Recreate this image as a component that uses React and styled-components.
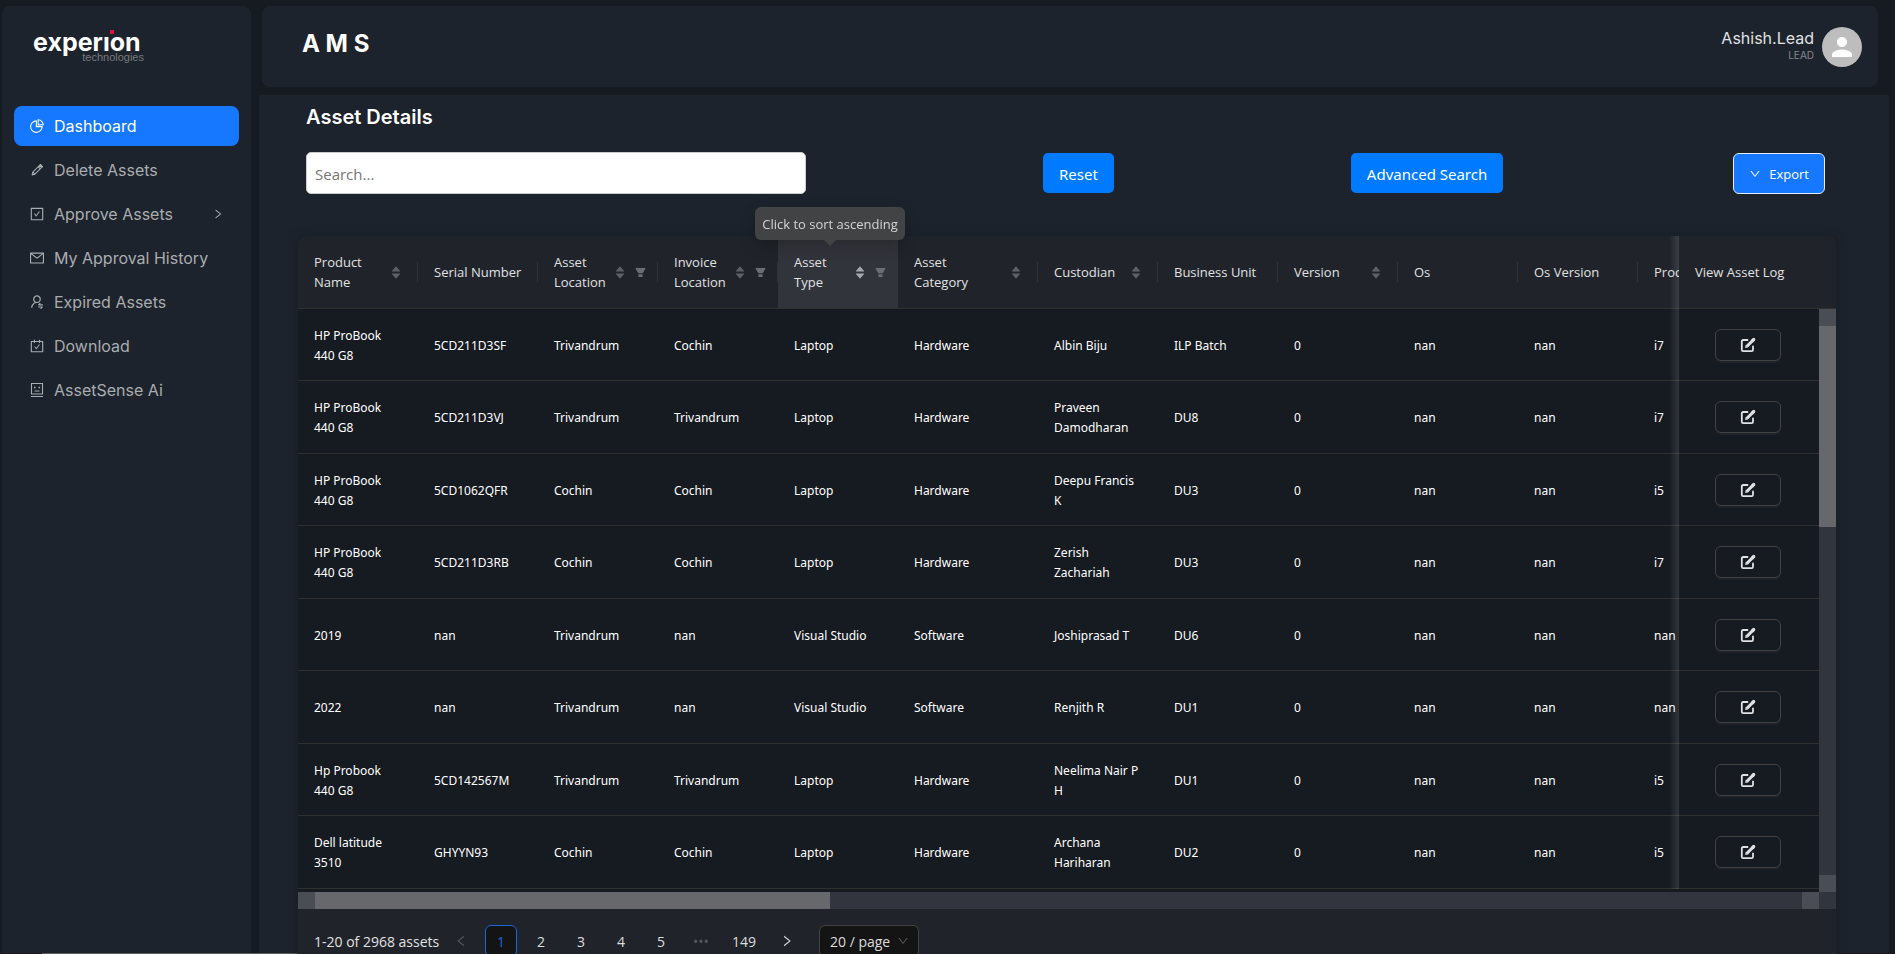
import React from "react";
import styled, { createGlobalStyle, css } from "styled-components";
import {
  AiOutlinePieChart,
  AiOutlineCheckSquare,
  AiOutlineMail,
  AiOutlineUserSwitch,
  AiOutlineCarryOut,
  AiOutlineRight,
  AiOutlineLeft,
  AiOutlineDown,
  AiFillCaretUp,
  AiFillCaretDown,
  AiFillFilter,
} from "react-icons/ai";
import { MdPerson } from "react-icons/md";

const ui = `Inter, "Liberation Sans", sans-serif`;
const body = `"Open Sans", "Noto Sans", sans-serif`;
const data = `"Noto Sans", "Open Sans", sans-serif`;

const GlobalStyle = createGlobalStyle`
  *, *::before, *::after { box-sizing: border-box; }
  body { margin: 0; background: #161b21; color: #e0e1e2; font-family: ${body}; font-size: 14px; }
  button, input, select { font-family: inherit; margin: 0; }
  a { text-decoration: none; color: inherit; }
`;

const Page = styled.div`
  height: 100vh;
  overflow: hidden;
  display: flex;
  flex-direction: column;
`;

const Shell = styled.div`
  flex: 1;
  min-height: 0;
  display: flex;
  gap: 8px;
  padding: 6px 6px 0 2px;
`;

const Sidebar = styled.aside`
  width: 249px;
  flex: none;
  background: #1d232c;
  border-radius: 8px 8px 0 0;
  padding: 0 12px;
  font-family: ${ui};
`;

const Logo = styled.a`
  display: flex;
  flex-direction: column;
  width: 111px;
  height: 100px;
  padding-top: 24px;
  margin-left: 19px;
`;

const LogoName = styled.span`
  position: relative;
  color: #ffffff;
  font-size: 25px;
  line-height: 24px;
  font-weight: 700;
`;

const LogoDot = styled.i`
  position: absolute;
  left: 77px;
  top: 0;
  width: 4px;
  height: 4px;
  background: #e0123c;
`;

const LogoSub = styled.span`
  align-self: flex-end;
  color: #77797d;
  font-family: "Liberation Sans", sans-serif;
  font-size: 11px;
  line-height: 6px;
`;

const Menu = styled.nav`
  display: flex;
  flex-direction: column;
  gap: 4px;
`;

const MenuItem = styled.a`
  display: flex;
  align-items: center;
  gap: 9px;
  height: 40px;
  padding: 0 15px;
  border-radius: 8px;
  font-size: 16px;
  color: #a9acb0;
  background: ${(p) => (p.$active ? "#1677ff" : "transparent")};
  ${(p) => p.$active && "color: #ffffff;"}
  span { flex: 1; }
  > svg { width: 16px; height: 16px; }
  > span + svg { width: 12px; height: 12px; }
`;

const Main = styled.main`
  flex: 1;
  min-width: 0;
  display: flex;
  flex-direction: column;
  gap: 8px;
`;

const Header = styled.header`
  height: 81px;
  flex: none;
  margin: 0 11px 0 3px;
  padding: 0 16px 0 40px;
  background: #1d232c;
  border-radius: 8px;
  display: flex;
  justify-content: space-between;
  font-family: ${ui};
`;

const Brand = styled.h1`
  margin: 0;
  padding-top: 21px;
  font-size: 24px;
  line-height: 34px;
  font-weight: 700;
  color: #ffffff;
`;

const User = styled.div`
  display: flex;
  gap: 8px;
  padding-top: 21px;
`;

const UserText = styled.div`
  display: flex;
  flex-direction: column;
  align-items: flex-end;
  font-size: 16px;
  line-height: 22px;
  color: #e0e1e2;
  small { font-size: 10px; line-height: 12px; color: #85888d; }
`;

const Avatar = styled.span`
  width: 40px;
  height: 40px;
  border-radius: 50%;
  background: #bdbdbd;
  color: #ffffff;
  display: grid;
  place-items: center;
  svg { width: 30px; height: 30px; }
`;

const Panel = styled.section`
  flex: 1;
  min-height: 0;
  background: #1d232c;
  padding: 8px 53px 0 39px;
`;

const Title = styled.h2`
  margin: 0 0 0 8px;
  font-family: ${ui};
  font-size: 20px;
  line-height: 28px;
  font-weight: 600;
  color: #ffffff;
`;

const Toolbar = styled.div`
  display: flex;
  justify-content: space-between;
  align-items: center;
  margin: 21px 11px 42px 8px;
`;

const Search = styled.input`
  width: 500px;
  height: 42px;
  padding: 2px 8px 0;
  border: 1px solid #cccccc;
  border-radius: 5px;
  background: #ffffff;
  font-size: 15px;
  &::placeholder { color: #757575; opacity: 1; }
`;

const BlueButton = styled.button`
  height: 40px;
  padding: 2px 16px 0;
  border: 0;
  border-radius: 5px;
  background: #007bff;
  color: #ffffff;
  font-family: ${data};
  font-size: 15px;
`;

const ExportButton = styled.button`
  display: flex;
  align-items: center;
  gap: 8px;
  height: 41px;
  margin-left: -7px;
  padding: 1px 15px 0;
  border: 1px solid #e6edf8;
  border-radius: 6px;
  background: #1677ff;
  color: #ffffff;
  font-size: 13px;
  svg { width: 12px; height: 12px; }
`;

const Card = styled.div`
  position: relative;
  background: #20242a;
  border-radius: 8px 8px 0 0;
  box-shadow: 0 0 10px rgba(22, 24, 34, 0.6);
  height: 100%;
`;

const Tooltip = styled.div`
  position: absolute;
  z-index: 3;
  left: 457px;
  top: -29px;
  width: 150px;
  height: 33px;
  border-radius: 6px;
  background: #424344;
  color: #d3d4d5;
  font-size: 13px;
  line-height: 35px;
  text-align: center;
  white-space: nowrap;
  box-shadow: 0 6px 16px rgba(0, 0, 0, 0.2);
  &::after {
    content: "";
    position: absolute;
    left: 69px;
    top: 33px;
    border: 6px solid transparent;
    border-top-color: #424344;
    border-bottom: 0;
  }
`;

const Scroller = styled.div`
  display: flex;
  height: 656px;
`;

const Viewport = styled.div`
  flex: 1;
  min-width: 0;
  overflow: hidden;
  background: #161a21;
  border-top-left-radius: 8px;
`;

const Table = styled.table`
  width: 1600px;
  min-width: 100%;
  table-layout: fixed;
  border-collapse: separate;
  border-spacing: 0;
  font-size: 13px;
  line-height: 20px;
`;

const Th = styled.th`
  position: relative;
  width: ${(p) => p.$width}px;
  height: 73px;
  padding: 0 16px;
  text-align: left;
  font-weight: 500;
  color: #e0e1e2;
  background: ${(p) => (p.$hover ? "#32343b" : "#20242a")};
  border-bottom: 1px solid #303030;
  &::after {
    content: "";
    position: absolute;
    right: 0;
    top: 26px;
    width: 1px;
    height: 20px;
    background: ${(p) => (p.$hover ? "transparent" : "#303236")};
  }
`;

const HeadCell = styled.div`
  display: flex;
  align-items: center;
  justify-content: space-between;
  white-space: ${(p) => (p.$wrap ? "normal" : "nowrap")};
  gap: ${(p) => (p.$wrap && !p.$filter ? "20px" : "0")};
  margin-right: ${(p) => (p.$filter ? "-5px" : "0")};
`;

const HeadIcons = styled.span`
  display: flex;
  align-items: center;
  gap: 8px;
`;

const Sorter = styled.button`
  display: flex;
  flex-direction: column;
  padding: 0;
  border: 0;
  background: none;
  color: ${(p) => (p.$hover ? "#a6a8ab" : "#5d6064")};
  svg { width: 12px; height: 12px; display: block; }
  svg + svg { margin-top: -5px; }
`;

const Filter = styled.button`
  display: flex;
  padding: 0;
  border: 0;
  background: none;
  color: #6a6d71;
  svg { width: 13px; height: 13px; }
`;

const fixedRight = css`
  position: sticky;
  right: 0;
  z-index: 1;
  &::before {
    content: "";
    position: absolute;
    right: 100%;
    top: 0;
    bottom: -1px;
    width: 10px;
    background: linear-gradient(to right, rgba(253, 253, 253, 0), rgba(253, 253, 253, 0.12));
  }
`;

const FixedTh = styled(Th)`
  ${fixedRight}
  &::after { content: none; }
`;

const Row = styled.tr`
  height: 72px;
  &:nth-child(even) { height: 73px; }
`;

const Td = styled.td`
  padding: 2px 16px 0;
  color: #ffffff;
  background: #161a21;
  border-bottom: 1px solid #303030;
  font-family: ${data};
  font-size: 12px;
`;

const FixedTd = styled(Td)`
  ${fixedRight}
  padding: 0 17px 0 15px;
  text-align: center;
`;

const LogButton = styled.button`
  width: 66px;
  height: 32px;
  display: inline-grid;
  place-items: center;
  vertical-align: middle;
  padding: 0;
  border: 1px solid #424242;
  border-radius: 6px;
  background: transparent;
  color: #e0e1e2;
  box-shadow: 0 2px 0 rgba(255, 255, 255, 0.04);
`;

const Side = styled.div`
  width: 17px;
  flex: none;
  display: flex;
  flex-direction: column;
`;

const SideHead = styled.div`
  height: 73px;
  border-bottom: 1px solid #303030;
`;

const Track = styled.div`
  display: flex;
  flex-direction: ${(p) => (p.$vertical ? "column" : "row")};
  flex: 1;
  min-height: 17px;
  background: #32353d;
`;

const TrackEnd = styled.span`
  flex: none;
  width: 17px;
  height: 17px;
  background: #4b4d54;
`;

const Thumb = styled.span`
  background: #66686c;
  ${(p) => (p.$vertical ? "height: 201px;" : "width: 515px;")}
`;

const Rest = styled.span`
  flex: 1;
`;

const BottomBar = styled.div`
  display: flex;
  height: 17px;
  background: #32353d;
  padding-right: 17px;
`;

const Pagination = styled.nav`
  display: flex;
  align-items: center;
  gap: 8px;
  padding: 16px 16px 0;
  font-size: 14px;
`;

const Total = styled.span`
  width: 123px;
  white-space: nowrap;
`;

const PageButton = styled.button`
  width: 32px;
  height: 32px;
  padding: 0;
  display: grid;
  place-items: center;
  font-size: 14px;
  border-radius: 6px;
  border: 1px solid ${(p) => (p.$active ? "#1668dc" : "transparent")};
  background: ${(p) => (p.$active ? "#141414" : "transparent")};
  color: ${(p) => (p.$active ? "#1668dc" : p.$dim ? "#55585c" : "#dcdddf")};
  svg { width: 14px; height: 14px; }
`;

const WideButton = styled(PageButton)`
  width: 38px;
`;

const SelectWrap = styled.label`
  position: relative;
  display: flex;
  align-items: center;
  margin-left: 8px;
  svg { position: absolute; right: 10px; width: 12px; height: 12px; color: #55585c; }
`;

const SizeSelect = styled.select`
  appearance: none;
  width: 100px;
  height: 32px;
  padding: 0 10px;
  border: 1px solid #424242;
  border-radius: 6px;
  background: #141414;
  color: #dcdddf;
  font-size: 14px;
`;

const Strip = styled.footer`
  flex: none;
  height: 1px;
  background: linear-gradient(
    to right,
    #1b191c 42px, #5c5c5c 42px, #5c5c5c 330px,
    #1b191c 330px, #1b191c 479px, #4c4c4e 479px, #4c4c4e 527px,
    #1b191c 527px, #1b191c 577px, #a8703a 577px, #a8703a 625px,
    #1b191c 625px
  );
`;

const EditIcon = () => (
  <svg width="16" height="16" viewBox="0 0 16 16" fill="none">
    <path d="M7.500 3H3.200C2.300 3 1.800 3.500 1.800 4.400v8.400c0 .9.5 1.400 1.400 1.400h8.400c.9 0 1.400-.5 1.400-1.400V9.500" stroke="currentColor" strokeWidth="1.800" strokeLinecap="round" />
    <path d="M6.800 9.500L13.200 3" stroke="currentColor" strokeWidth="3.200" />
    <path d="M5.200 11l.4-2.900 2.400 2.400z" fill="currentColor" />
    <path d="M12.700 3.500l1-1" stroke="currentColor" strokeWidth="3.200" strokeLinecap="round" />
  </svg>
);

const PencilIcon = () => (
  <svg viewBox="-1 -1 18 18" fill="none" stroke="currentColor" strokeWidth="1.200" strokeLinejoin="round">
    <path d="M2.500 13.500l.8-3.200 7.600-7.600 2.400 2.400-7.600 7.600z" />
    <path d="M9.300 4.300l2.400 2.400M3.300 10.300l2.400 2.400" />
    <path d="M10.900 2.700l1-.9 2.300 2.300-.9 1z" fill="currentColor" />
  </svg>
);

const FaceIcon = () => (
  <svg viewBox="0 0 16 16" fill="none" stroke="currentColor" strokeWidth="1.100">
    <path d="M2.500 1.500h11v10.500h-11zM2 14.500h12M5.500 9h5" />
    <path d="M5 5.500h1.500M9.500 5.500H11" strokeWidth="1.500" />
  </svg>
);

const menu = [
  ["Dashboard", AiOutlinePieChart],
  ["Delete Assets", PencilIcon],
  ["Approve Assets", AiOutlineCheckSquare],
  ["My Approval History", AiOutlineMail],
  ["Expired Assets", AiOutlineUserSwitch],
  ["Download", AiOutlineCarryOut],
  ["AssetSense Ai", FaceIcon],
];

const columns = [
  { label: "Product Name", sort: true, wrap: true },
  { label: "Serial Number" },
  { label: "Asset Location", sort: true, filter: true, wrap: true },
  { label: "Invoice Location", sort: true, filter: true, wrap: true },
  { label: "Asset Type", sort: true, filter: true, hover: true, wrap: true },
  { label: "Asset Category", sort: true, width: 140, wrap: true },
  { label: "Custodian", sort: true },
  { label: "Business Unit" },
  { label: "Version", sort: true },
  { label: "Os" },
  { label: "Os Version" },
  { label: "Processor" },
];

const rows = [
  ["HP ProBook 440 G8", "5CD211D3SF", "Trivandrum", "Cochin", "Laptop", "Hardware", "Albin Biju", "ILP Batch", "0", "nan", "nan", "i7"],
  ["HP ProBook 440 G8", "5CD211D3VJ", "Trivandrum", "Trivandrum", "Laptop", "Hardware", "Praveen Damodharan", "DU8", "0", "nan", "nan", "i7"],
  ["HP ProBook 440 G8", "5CD1062QFR", "Cochin", "Cochin", "Laptop", "Hardware", "Deepu Francis K", "DU3", "0", "nan", "nan", "i5"],
  ["HP ProBook 440 G8", "5CD211D3RB", "Cochin", "Cochin", "Laptop", "Hardware", "Zerish Zachariah", "DU3", "0", "nan", "nan", "i7"],
  ["2019", "nan", "Trivandrum", "nan", "Visual Studio", "Software", "Joshiprasad T", "DU6", "0", "nan", "nan", "nan"],
  ["2022", "nan", "Trivandrum", "nan", "Visual Studio", "Software", "Renjith R", "DU1", "0", "nan", "nan", "nan"],
  ["Hp Probook 440 G8", "5CD142567M", "Trivandrum", "Trivandrum", "Laptop", "Hardware", "Neelima Nair P H", "DU1", "0", "nan", "nan", "i5"],
  ["Dell latitude 3510", "GHYYN93", "Cochin", "Cochin", "Laptop", "Hardware", "Archana Hariharan", "DU2", "0", "nan", "nan", "i5"],
];

function AssetTable() {
  return (
    <Table>
      <thead>
        <tr>
          {columns.map((c) => (
            <Th key={c.label} $width={c.width || 120} $hover={c.hover}>
              <HeadCell $filter={c.filter} $wrap={c.wrap}>
                <span>{c.label}</span>
                {c.sort && (
                  <HeadIcons>
                    <Sorter $hover={c.hover} aria-label={`Sort by ${c.label}`}>
                      <AiFillCaretUp />
                      <AiFillCaretDown />
                    </Sorter>
                    {c.filter && (
                      <Filter aria-label={`Filter ${c.label}`}>
                        <AiFillFilter />
                      </Filter>
                    )}
                  </HeadIcons>
                )}
              </HeadCell>
            </Th>
          ))}
          <FixedTh $width={140}>View Asset Log</FixedTh>
        </tr>
      </thead>
      <tbody>
        {rows.map((r, i) => (
          <Row key={i}>
            {r.map((v, j) => (
              <Td key={j}>{v}</Td>
            ))}
            <FixedTd>
              <LogButton aria-label="View asset log">
                <EditIcon />
              </LogButton>
            </FixedTd>
          </Row>
        ))}
      </tbody>
    </Table>
  );
}

export default function App() {
  return (
    <Page>
      <GlobalStyle />
      <Shell>
        <Sidebar>
          <Logo href="#">
            <LogoName>
              experıon
              <LogoDot />
            </LogoName>
            <LogoSub>technologies</LogoSub>
          </Logo>
          <Menu>
            {menu.map(([label, Icon], i) => (
              <MenuItem key={label} href="#" $active={i === 0}>
                <Icon />
                <span>{label}</span>
                {label === "Approve Assets" && <AiOutlineRight />}
              </MenuItem>
            ))}
          </Menu>
        </Sidebar>
        <Main>
          <Header>
            <Brand>A M S</Brand>
            <User>
              <UserText>
                Ashish.Lead
                <small>LEAD</small>
              </UserText>
              <Avatar>
                <MdPerson />
              </Avatar>
            </User>
          </Header>
          <Panel>
            <Title>Asset Details</Title>
            <Toolbar>
              <Search type="text" placeholder="Search..." aria-label="Search" />
              <BlueButton>Reset</BlueButton>
              <BlueButton>Advanced Search</BlueButton>
              <ExportButton>
                <AiOutlineDown />
                Export
              </ExportButton>
            </Toolbar>
            <Card>
              <Tooltip role="tooltip">Click to sort ascending</Tooltip>
              <Scroller>
                <Viewport>
                  <AssetTable />
                </Viewport>
                <Side>
                  <SideHead />
                  <Track $vertical>
                    <TrackEnd />
                    <Thumb $vertical />
                    <Rest />
                    <TrackEnd />
                  </Track>
                </Side>
              </Scroller>
              <BottomBar>
                <Track>
                  <TrackEnd />
                  <Thumb />
                  <Rest />
                  <TrackEnd />
                </Track>
              </BottomBar>
              <Pagination aria-label="Pages">
                <Total>1-20 of 2968 assets</Total>
                <PageButton $dim aria-label="Previous page"><AiOutlineLeft /></PageButton>
                <PageButton $active>1</PageButton>
                <PageButton>2</PageButton>
                <PageButton>3</PageButton>
                <PageButton>4</PageButton>
                <PageButton>5</PageButton>
                <PageButton $dim aria-label="Next 5 pages">•••</PageButton>
                <WideButton>149</WideButton>
                <PageButton aria-label="Next page"><AiOutlineRight /></PageButton>
                <SelectWrap>
                  <SizeSelect aria-label="Page size" defaultValue="20">
                    <option value="20">20 / page</option>
                  </SizeSelect>
                  <AiOutlineDown />
                </SelectWrap>
              </Pagination>
            </Card>
          </Panel>
        </Main>
      </Shell>
      <Strip />
    </Page>
  );
}
